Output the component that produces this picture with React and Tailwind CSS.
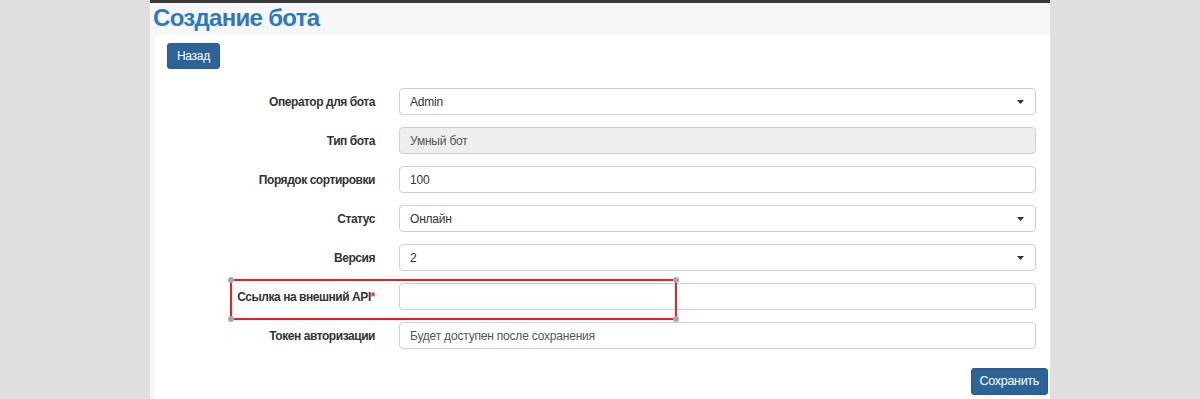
import React from 'react';

const font = { fontFamily: '"Liberation Sans", Arial, Helvetica, sans-serif' };

function Caret() {
  return (
    <svg width="7" height="4" viewBox="0 0 7 4" className="absolute right-[11px] top-[11px]">
      <path d="M0 0 L7 0 L3.5 4 Z" fill="#333" />
    </svg>
  );
}

function Field({ label, value, required, disabled, select, placeholder }) {
  return (
    <div className="flex items-center h-[27px]">
      <div className="w-[220px] shrink-0 text-right text-[12px] tracking-[-0.45px] font-bold text-[#333]">
        {label}
        {required && <span className="text-[#e0302b]">*</span>}
      </div>
      <div
        className={
          'relative ml-[24px] w-[637px] h-[27px] rounded-[4px] border border-[#cfcfcf] px-[10px] flex items-center text-[12px] tracking-[-0.2px] ' +
          (disabled ? 'bg-[#eeeeee] text-[#555]' : 'bg-white text-[#333]')
        }
      >
        {value ? <span>{value}</span> : placeholder ? <span className="text-[#555]">{placeholder}</span> : null}
        {select && <Caret />}
      </div>
    </div>
  );
}

function Handle({ className }) {
  return <div className={'absolute w-[6px] h-[6px] rounded-full bg-[#a8a8a8] ' + className} />;
}

export default function App() {
  return (
    <div className="h-[399px] w-full bg-[#dfdfdf] flex justify-center overflow-hidden" style={font}>
      <div className="w-[900px] border-t-[3px] border-[#3a3a3a] bg-[#f7f7f7] flex flex-col">
        <h1 className="h-[32px] pl-[3px] text-[24px] leading-[29px] tracking-[-0.7px] font-bold text-[#2a79c4]">
          Создание бота
        </h1>
        <div className="ml-[5px] flex-1 bg-white pt-[8px] pl-[12px]">
          <button className="h-[26px] px-[9px] rounded-[3px] bg-[#2d6498] text-white text-[12px] tracking-[-0.3px] border border-[#285b8a]">
            Назад
          </button>
          <div className="-ml-[12px] mt-[19px] flex flex-col gap-[12px]">
            <Field label="Оператор для бота" value="Admin" select />
            <Field label="Тип бота" value="Умный бот" disabled />
            <Field label="Порядок сортировки" value="100" />
            <Field label="Статус" value="Онлайн" select />
            <Field label="Версия" value="2" select />
            <div className="relative">
              <Field label="Ссылка на внешний API" required />
              <div className="absolute left-[75px] top-[-4px] w-[447px] h-[41px] border-2 border-[#ee1c24]">
                <Handle className="-left-[4px] -top-[4px]" />
                <Handle className="-right-[4px] -top-[4px]" />
                <Handle className="-left-[4px] -bottom-[4px]" />
                <Handle className="-right-[4px] -bottom-[4px]" />
              </div>
            </div>
            <Field label="Токен авторизации" placeholder="Будет доступен после сохранения" />
          </div>
          <div className="flex justify-end pr-[2px] mt-[19px]">
            <button className="h-[27px] px-[8px] rounded-[3px] bg-[#2d6498] text-white text-[12.5px] tracking-[-0.3px] border border-[#285b8a]">
              Сохранить
            </button>
          </div>
        </div>
      </div>
    </div>
  );
}
